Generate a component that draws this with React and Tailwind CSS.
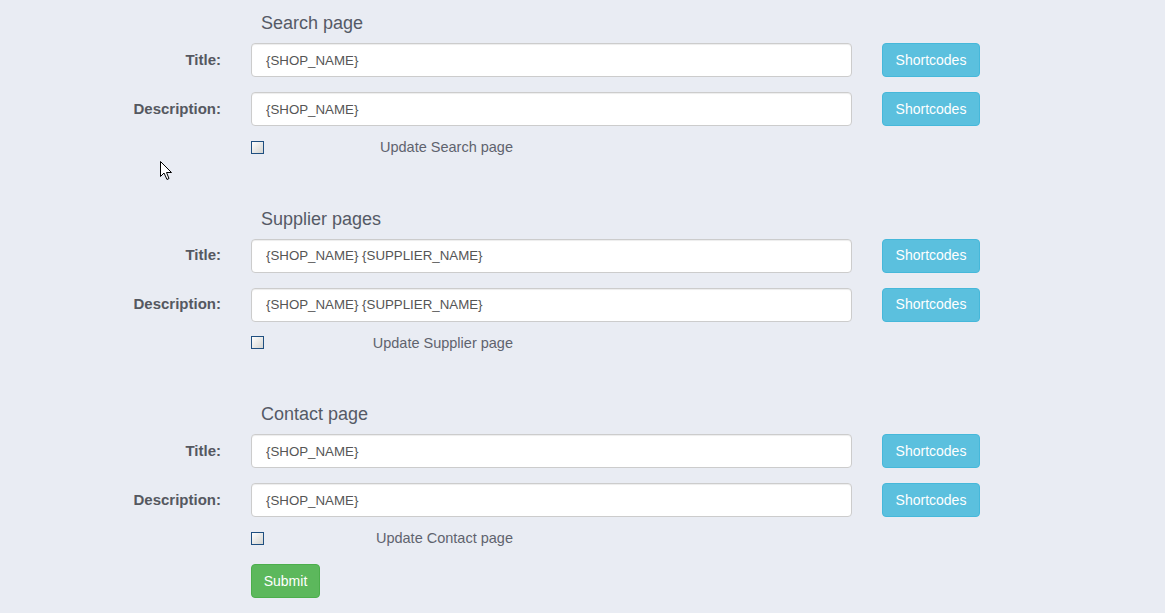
import React from 'react';

const sections = [
  { heading: 'Search page', title: '{SHOP_NAME}', desc: '{SHOP_NAME}', update: 'Update Search page' },
  { heading: 'Supplier pages', title: '{SHOP_NAME} {SUPPLIER_NAME}', desc: '{SHOP_NAME} {SUPPLIER_NAME}', update: 'Update Supplier page' },
  { heading: 'Contact page', title: '{SHOP_NAME}', desc: '{SHOP_NAME}', update: 'Update Contact page' },
];

function Row({ label, value }) {
  return (
    <div className="flex items-center h-[34px]">
      <label className="w-[221px] text-right text-[15px] font-bold text-[#555860]">{label}</label>
      <input
        readOnly
        value={value}
        className="ml-[30px] w-[601px] h-[34px] rounded-[4px] border border-[#cccccc] bg-white px-[14px] text-[13.3px] text-[#555] outline-none shadow-[inset_0_1px_1px_rgba(0,0,0,0.075)]"
      />
      <button className="ml-[30px] w-[98px] h-[34px] rounded-[4px] border border-[#46b8da] bg-[#5bc0de] text-[14px] text-white">
        Shortcodes
      </button>
    </div>
  );
}

function Section({ s, last }) {
  return (
    <div className={last ? '' : 'mb-[49.5px]'}>
      <h3 className="ml-[261px] h-[24px] leading-[24px] text-[18px] text-[#555a66]">{s.heading}</h3>
      <div className="mt-[8px] flex flex-col gap-[15px]">
        <Row label="Title:" value={s.title} />
        <Row label="Description:" value={s.desc} />
      </div>
      <div className="ml-[251px] mt-[11px] w-[262px] h-[20px] flex items-center justify-between">
        <span className="block w-[13px] h-[13px] border border-[#1f4f80] bg-gradient-to-br from-[#ffffff] to-[#d4d4d0]" />
        <span className="pt-[2px] text-[14.5px] text-[#5f636e]">{s.update}</span>
      </div>
    </div>
  );
}

export default function App() {
  return (
    <div className="relative w-[1165px] h-[613px] bg-[#e9ecf3] pt-[11px] overflow-hidden" style={{ fontFamily: '"Liberation Sans", Arial, sans-serif' }}>
      {sections.map((s, i) => (
        <Section key={s.heading} s={s} last={i === sections.length - 1} />
      ))}
      <button className="ml-[251px] mt-[16px] w-[69px] h-[34px] rounded-[4px] border border-[#4cae4c] bg-[#5cb85c] text-[14px] text-white">
        Submit
      </button>
      {/* mouse pointer left in the screenshot */}
      <svg className="absolute left-[160px] top-[161px]" width="13" height="21" viewBox="0 0 13 21">
        <path d="M0.5 0.5 L0.5 15.5 L4 12 L7 18.5 L9 17.5 L6.5 11.5 L11.5 11.5 Z" fill="#fff" stroke="#000" strokeWidth="1" />
      </svg>
    </div>
  );
}
